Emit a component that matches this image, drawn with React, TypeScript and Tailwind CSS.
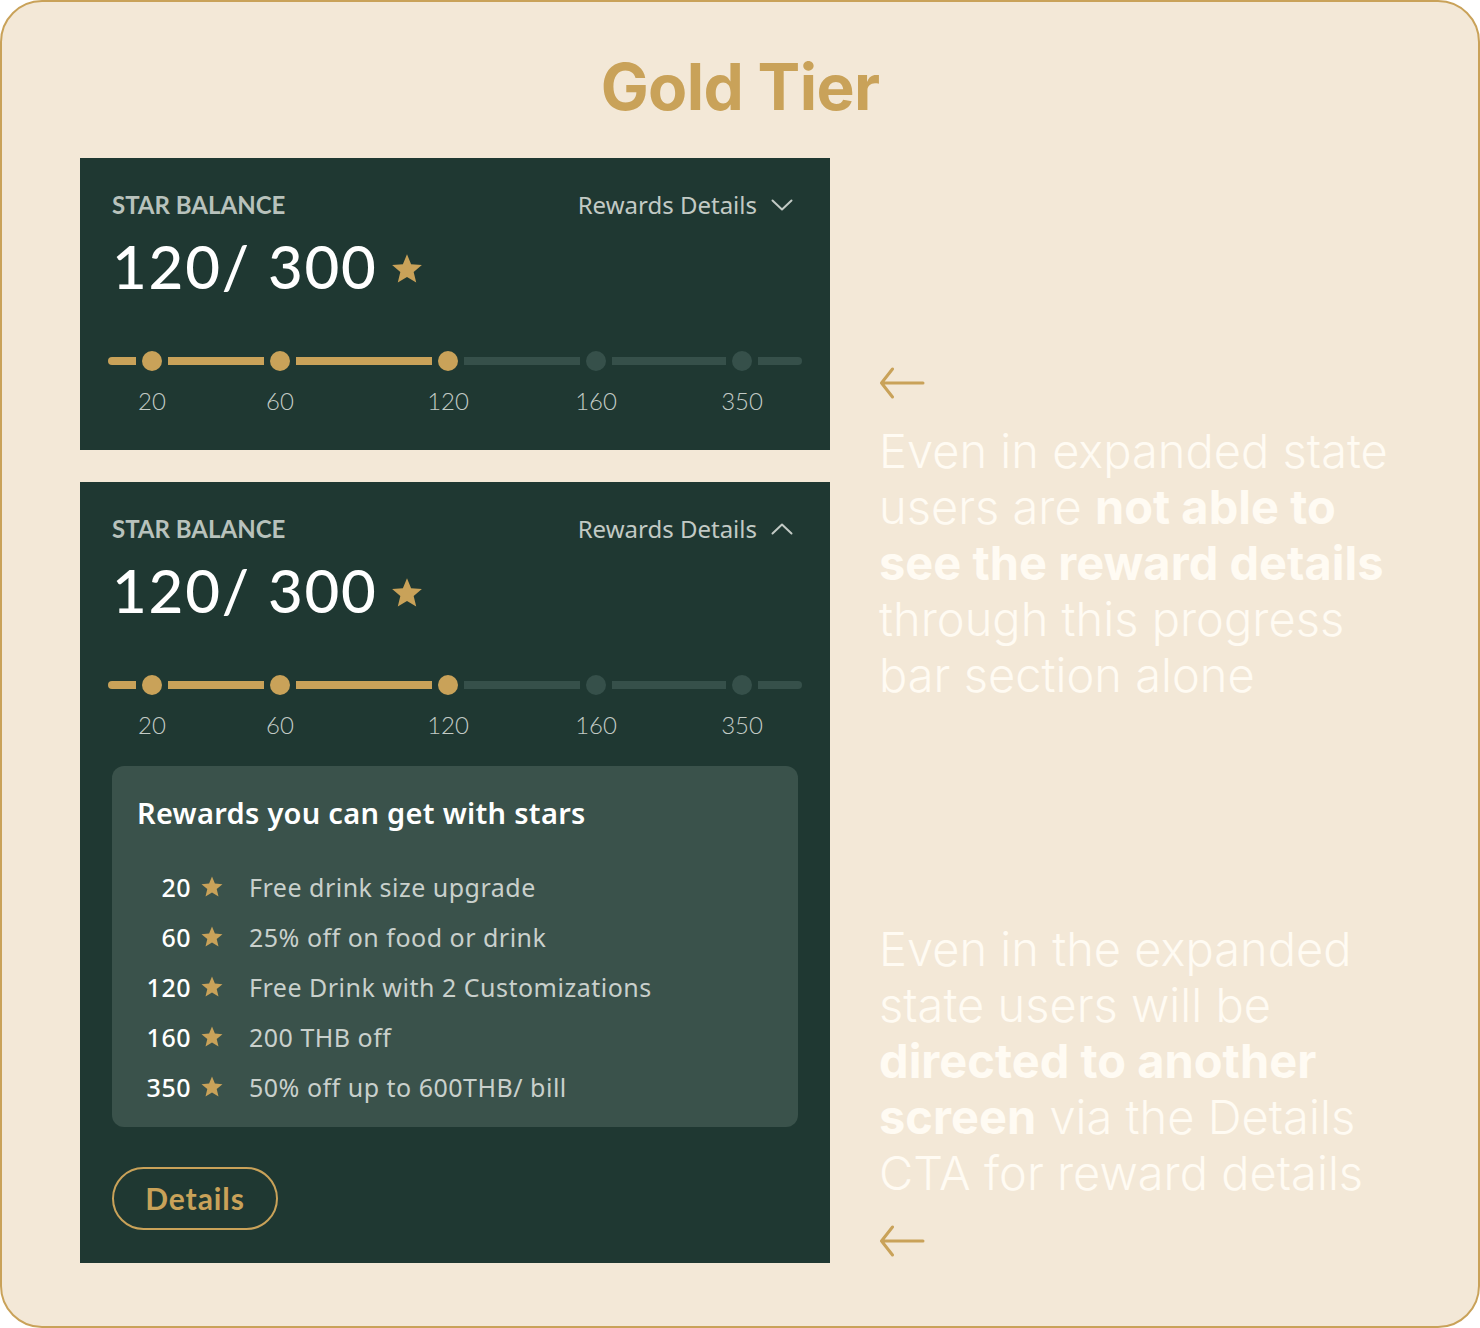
import { Fragment } from "react";

const GOLD = "#c9a259";
const NOTO = { fontFamily: "'Noto Sans', Lato, sans-serif" };

const steps = [
  { label: "20", seg: 28, active: true },
  { label: "60", seg: 96, active: true },
  { label: "120", seg: 136, active: true },
  { label: "160", seg: 116, active: false },
  { label: "350", seg: 114, active: false },
];

const rewards = [
  { stars: "20", text: "Free drink size upgrade" },
  { stars: "60", text: "25% off on food or drink" },
  { stars: "120", text: "Free Drink with 2 Customizations" },
  { stars: "160", text: "200 THB off" },
  { stars: "350", text: "50% off up to 600THB/ bill" },
];

function Star({ size }: { size: number }) {
  return (
    <svg width={size} height={size} viewBox="0 0 24 24">
      <polygon
        points="12,1.5 14.9,8.6 22.5,9.2 16.7,14.1 18.5,21.6 12,17.6 5.5,21.6 7.3,14.1 1.5,9.2 9.1,8.6"
        fill={GOLD}
      />
    </svg>
  );
}

function Chevron({ up }: { up?: boolean }) {
  return (
    <svg width="22" height="12" viewBox="0 0 22 12" fill="none">
      <path
        d={up ? "M1.5 10.5 L11 1.5 L20.5 10.5" : "M1.5 1.5 L11 10.5 L20.5 1.5"}
        stroke="#c2cac5"
        strokeWidth="2"
        strokeLinecap="round"
        strokeLinejoin="round"
      />
    </svg>
  );
}

function Arrow() {
  return (
    <svg width="46" height="32" viewBox="0 0 46 32" fill="none">
      <path
        d="M44 16 H2.5 M13.5 2 L2.5 16 L13.5 30"
        stroke={GOLD}
        strokeWidth="3"
        strokeLinecap="round"
        strokeLinejoin="round"
      />
    </svg>
  );
}

function Progress() {
  return (
    <div className="flex items-start gap-[6px] -ml-1 mt-[55px]">
      {steps.map((s, i) => (
        <Fragment key={s.label}>
          <div
            className={`mt-[6px] h-2 ${i === 0 ? "rounded-l-full" : ""} ${
              s.active ? "bg-[#c9a259]" : "bg-[#36504a]"
            }`}
            style={{ width: s.seg }}
          />
          <div className="flex w-5 flex-col items-center">
            <div
              className={`h-5 w-5 rounded-full ${
                s.active ? "bg-[#c9a259]" : "bg-[#36504a]"
              }`}
            />
            <span className="mt-[18px] whitespace-nowrap text-[24px] leading-none font-light text-[#c3cbc6]">
              {s.label}
            </span>
          </div>
        </Fragment>
      ))}
      <div className="mt-[6px] h-2 w-[44px] rounded-r-full bg-[#36504a]" />
    </div>
  );
}

function BalanceHeader({ open }: { open?: boolean }) {
  return (
    <>
      <div className="flex items-end justify-between pr-[37px]">
        <span className="text-[24px] leading-none font-bold text-[#b8c2bc]">STAR BALANCE</span>
        <span className="flex items-center gap-[14px] text-[24px] leading-none text-[#c2cac5]" style={NOTO}>
          Rewards Details
          <Chevron up={open} />
        </span>
      </div>
      <div className="mt-[19px] flex items-center gap-3">
        <span className="text-[60px] leading-none font-medium tracking-[0.03em] text-white">120/ 300</span>
        <span className="mt-[6px]">
          <Star size={34} />
        </span>
      </div>
      <Progress />
    </>
  );
}

export default function App() {
  return (
    <div
      className="flex h-[1328px] w-[1480px] flex-col items-center rounded-[42px] border-2 border-[#c9a259] bg-[#f3e8d7] pt-[53px]"
      style={{ fontFamily: "Lato, 'Noto Sans', sans-serif" }}
    >
      <h1
        className="text-[64px] leading-[64px] font-bold tracking-[-0.01em] text-[#c9a259]"
        style={{ fontFamily: "Inter, sans-serif" }}
      >
        Gold Tier
      </h1>

      <div className="mt-[39px] flex w-full pl-[78px]">
        <div className="flex w-[750px] flex-col gap-8">
          <div className="bg-[#1f3832] pb-[37px] pl-8 pt-[35px]">
            <BalanceHeader />
          </div>

          <div className="bg-[#1f3832] pb-[33px] pl-8 pt-[35px]">
            <BalanceHeader open />
            <div className="mr-8 mt-[29px] rounded-xl bg-[#3a524b] pb-[14px] pl-[25px] pt-8" style={NOTO}>
              <h2 className="text-[29px] leading-none font-semibold tracking-[0.01em] text-white">
                Rewards you can get with stars
              </h2>
              <div className="mt-9 flex flex-col">
                {rewards.map((r) => (
                  <div key={r.stars} className="flex h-[50px] items-center text-[25px] tracking-[0.02em]">
                    <span className="w-[54px] text-right font-medium text-white">{r.stars}</span>
                    <span className="ml-[9px] mb-[2px]">
                      <Star size={24} />
                    </span>
                    <span className="ml-[25px] text-[#c9d0cc]">{r.text}</span>
                  </div>
                ))}
              </div>
            </div>
            <button className="mt-10 flex h-[63px] w-[166px] items-center justify-center rounded-full border-2 border-[#c9a259] text-[30px] font-bold tracking-[0.03em] text-[#c9a259]">
              Details
            </button>
          </div>
        </div>

        <div
          className="ml-[49px] flex flex-col pt-[209px] text-[47px] leading-[56px] font-light text-[#fffbf3]"
          style={{ fontFamily: "Inter, sans-serif" }}
        >
          <Arrow />
          <p className="mt-[24px] whitespace-nowrap">
            Even in expanded state
            <br />
            users are <span className="font-bold">not able to</span>
            <br />
            <span className="font-bold">see the reward details</span>
            <br />
            through this progress
            <br />
            bar section alone
          </p>
          <p className="mt-[218px] whitespace-nowrap">
            Even in the expanded
            <br />
            state users will be
            <br />
            <span className="font-bold">directed to another</span>
            <br />
            <span className="font-bold">screen</span> via the Details
            <br />
            CTA for reward details
          </p>
          <div className="mt-[24px]">
            <Arrow />
          </div>
        </div>
      </div>
    </div>
  );
}
